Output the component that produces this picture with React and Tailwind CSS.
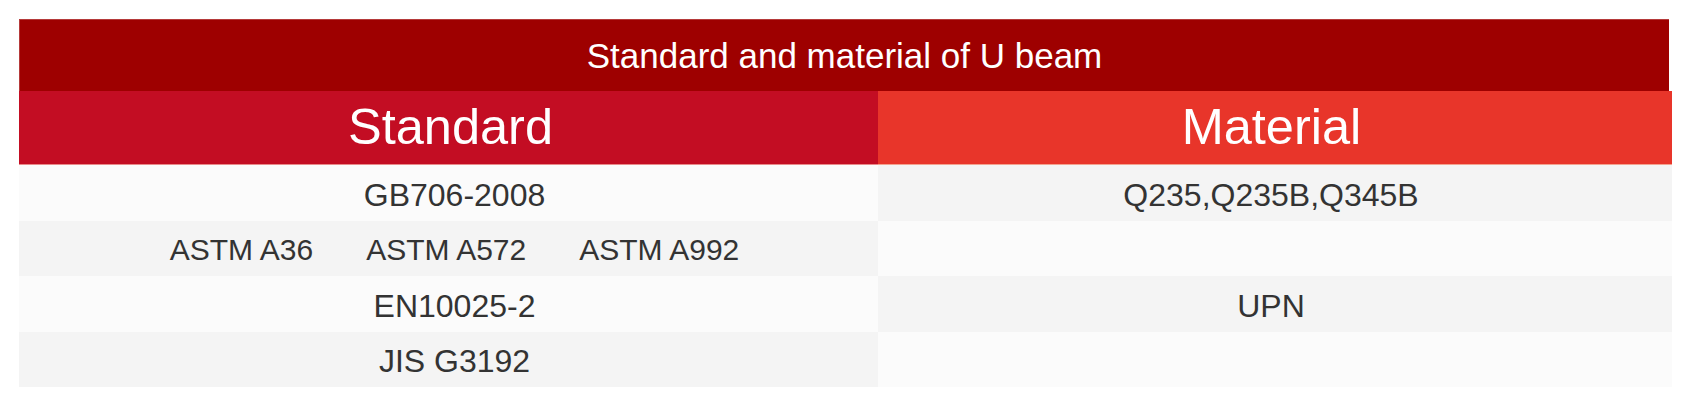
import React from "react";

export default function App() {
  const rows = [
    { standard: ["GB706-2008"], material: "Q235,Q235B,Q345B" },
    { standard: ["ASTM A36", "ASTM A572", "ASTM A992"], material: "" },
    { standard: ["EN10025-2"], material: "UPN" },
    { standard: ["JIS G3192"], material: "" },
  ];

  return (
    <div
      className="min-h-screen bg-white pt-[19px] pl-[19px]"
      style={{ fontFamily: '"Liberation Sans", Arial, sans-serif' }}
    >
      <div className="w-[1653px]">
        {/* Title bar */}
        <div className="w-[1650px] h-[72px] bg-[#9e0000] border-t border-l border-[#b53a3a] flex items-center justify-center">
          <h2 className="text-white text-[35px] leading-none">
            Standard and material of U beam
          </h2>
        </div>

        {/* Header + rows */}
        <div className="grid grid-cols-[859px_794px]">
          <div className="h-[74px] bg-[#c30d23] border-b border-[#e98a8a] flex items-center justify-center pl-1">
            <span className="text-white text-[50.5px] leading-none">Standard</span>
          </div>
          <div className="h-[74px] bg-[#e8352a] border-b border-[#f3a28f] flex items-center justify-center pr-[7px]">
            <span className="text-white text-[50.5px] leading-none">Material</span>
          </div>

          {rows.map((row, i) => {
            const h = i % 2 === 0 ? "h-[56px]" : "h-[55px]";
            return (
              <React.Fragment key={i}>
                <div
                  className={`${h} ${
                    i % 2 === 0 ? "bg-[#fbfbfb]" : "bg-[#f4f4f4]"
                  } flex items-center justify-center gap-[53px] pl-[12px] pt-[3px] text-[#333333] ${
                    row.standard.length > 1 ? "text-[30px]" : "text-[32px]"
                  } leading-none`}
                >
                  {row.standard.map((s) => (
                    <span key={s}>{s}</span>
                  ))}
                </div>
                <div
                  className={`${h} ${
                    i % 2 === 0 ? "bg-[#f4f4f4]" : "bg-[#fbfbfb]"
                  } flex items-center justify-center pr-2 pt-[3px] text-[#333333] text-[32px] leading-none`}
                >
                  {row.material}
                </div>
              </React.Fragment>
            );
          })}
        </div>
      </div>
    </div>
  );
}
